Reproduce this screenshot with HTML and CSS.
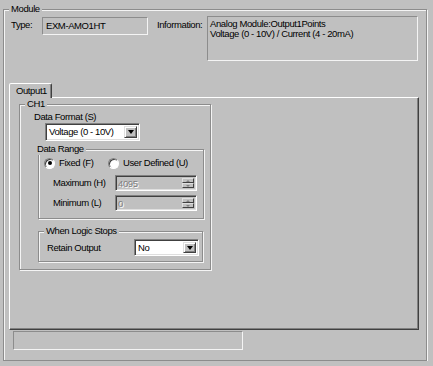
FILE: index.html
```html
<!DOCTYPE html>
<html lang="en">
<head>
  <meta charset="UTF-8">
  <title>Module - Output1</title>
  <link rel="stylesheet" href="styles.css">
</head>
<body>
  <fieldset class="group module">
    <legend>Module</legend>
    <div class="module-row">
      <span class="lbl type-lbl">Type:</span>
      <div class="static type-box">EXM-AMO1HT</div>
      <span class="lbl info-lbl">Information:</span>
      <div class="static info-box">Analog Module:Output1Points<br>Voltage (0 - 10V) / Current (4 - 20mA)</div>
    </div>

    <div class="tabs">
      <div class="tab">Output1</div>
    </div>
    <div class="panel">
      <fieldset class="group ch">
        <legend>CH1</legend>
        <div class="field-lbl">Data Format (S)</div>
        <div class="combo fmt-combo">
          <span class="combo-text">Voltage (0 - 10V)</span>
          <span class="drop"><i class="arrow"></i></span>
        </div>

        <fieldset class="group range">
          <legend>Data Range</legend>
          <div class="radios">
            <label class="radio-item fixed"><span class="radio checked"></span>Fixed (F)</label>
            <label class="radio-item"><span class="radio"></span>User Defined (U)</label>
          </div>
          <div class="spin-row first">
            <span class="spin-lbl">Maximum (H)</span>
            <div class="spin">
              <span class="spin-val">4095</span>
              <span class="spin-btns"><span class="sbtn"><i class="up"></i></span><span class="sbtn"><i class="down"></i></span></span>
            </div>
          </div>
          <div class="spin-row">
            <span class="spin-lbl">Minimum (L)</span>
            <div class="spin">
              <span class="spin-val">0</span>
              <span class="spin-btns"><span class="sbtn"><i class="up"></i></span><span class="sbtn"><i class="down"></i></span></span>
            </div>
          </div>
        </fieldset>

        <fieldset class="group stops">
          <legend>When Logic Stops</legend>
          <div class="retain-row">
            <span class="retain-lbl">Retain Output</span>
            <div class="combo retain-combo">
              <span class="combo-text">No</span>
              <span class="drop"><i class="arrow"></i></span>
            </div>
          </div>
        </fieldset>
      </fieldset>
    </div>

    <div class="status"></div>
  </fieldset>
</body>
</html>
```

FILE: styles.css
```css
* { box-sizing: border-box; }

body {
  margin: 0;
  padding: 3px 0 0 3px;
  background: #c0c0c0;
  font-family: "Liberation Sans", Arial, sans-serif;
  font-size: 9.5px;
  letter-spacing: -0.4px;
  line-height: 12px;
  color: #000;
}

/* etched group boxes */
.group {
  margin: 0;
  border: 1px solid #8c8c8c;
  box-shadow: inset 1px 1px 0 #f4f4f4, 1px 1px 0 #f4f4f4;
  min-inline-size: 0;
}
.group legend {
  padding: 0 2px;
  background: #c0c0c0;
  line-height: 12px;
}

.module {
  width: 424px;
  padding: 1px 0 10px 7px;
}
.module legend { margin-left: -2px; }

.module-row {
  display: flex;
  align-items: flex-start;
}
.lbl { padding-top: 3px; }
.type-lbl { width: 31px; }
.info-lbl { width: 50px; margin-left: 9px; }

.static {
  border: 1px solid;
  border-color: #8c8c8c #f4f4f4 #f4f4f4 #8c8c8c;
}
.type-box {
  width: 106px;
  height: 18px;
  margin-top: 1px;
  padding: 2px 0 0 3px;
}
.info-box {
  width: 211px;
  height: 45px;
  padding: 2px 0 0 2px;
  line-height: 10px;
}

/* tab control */
.tabs {
  display: flex;
  margin: 22px 0 0 -2px;
}
.tab {
  position: relative;
  z-index: 1;
  width: 43px;
  height: 15px;
  margin-bottom: -1px;
  padding: 1px 0 0 6px;
  background: #c0c0c0;
  border: 1px solid;
  border-bottom: none;
  border-color: #fff #404040 transparent #fff;
  border-radius: 2px 2px 0 0;
  box-shadow: inset -1px 0 0 #808080;
}
.panel {
  width: 410px;
  height: 233px;
  margin-left: -2px;
  padding-left: 9px;
  border: 1px solid;
  border-color: #fff #404040 #404040 #fff;
  box-shadow: inset -1px -1px 0 #808080;
}

.ch {
  width: 192px;
  padding: 1px 5px 7px 14px;
}
.ch legend { margin-left: -9px; }

.field-lbl { height: 12px; }

/* combo boxes */
.combo {
  display: flex;
  justify-content: space-between;
  background: #fff;
  border: 1px solid;
  border-color: #808080 #fff #fff #808080;
  box-shadow: inset 1px 1px 0 #404040, inset -1px -1px 0 #dfdfdf;
  padding: 2px;
}
.combo-text { padding-left: 1px; line-height: 12px; }
.fmt-combo {
  width: 95px;
  height: 18px;
  margin-left: 11px;
}
.drop {
  display: flex;
  align-items: center;
  justify-content: center;
  width: 13px;
  background: #c0c0c0;
  border: 1px solid;
  border-color: #dfdfdf #404040 #404040 #dfdfdf;
  box-shadow: inset 1px 1px 0 #fff, inset -1px -1px 0 #808080;
}
.arrow {
  width: 0;
  height: 0;
  border-left: 3.5px solid transparent;
  border-right: 3.5px solid transparent;
  border-top: 4px solid #000;
}

.range {
  width: 166px;
  margin: 2px 0 0 4px;
  padding: 2px 0 7px 5px;
}

.radios { display: flex; height: 12px; }
.radio-item {
  display: flex;
  align-items: center;
  gap: 4px;
}
.fixed { width: 64px; }
.radio {
  position: relative;
  width: 11px;
  height: 11px;
  border-radius: 50%;
  background: #fff;
  border: 1px solid;
  border-color: #808080 #fff #fff #808080;
  box-shadow: inset 1px 1px 0 #404040;
}
.radio.checked::after {
  content: "";
  position: absolute;
  left: 2.5px;
  top: 2.5px;
  width: 4px;
  height: 4px;
  border-radius: 50%;
  background: #000;
}

.spin-row {
  display: flex;
  align-items: center;
  margin-top: 4px;
}
.spin-row.first { margin-top: 6px; }
.spin-lbl { width: 71px; padding-left: 9px; }
.spin {
  display: flex;
  justify-content: space-between;
  width: 82px;
  height: 16px;
  padding: 2px;
  border: 1px solid;
  border-color: #808080 #fff #fff #808080;
  box-shadow: inset 1px 1px 0 #404040, inset -1px -1px 0 #dfdfdf;
}
.spin-val {
  color: #808080;
  text-shadow: 1px 1px 0 #fff;
  line-height: 11px;
}
.spin-btns {
  display: flex;
  flex-direction: column;
  width: 12px;
}
.sbtn {
  flex: 1;
  display: flex;
  align-items: center;
  justify-content: center;
  border: 1px solid;
  border-color: #dfdfdf #404040 #404040 #dfdfdf;
}
.sbtn i {
  width: 0;
  height: 0;
  border-left: 2px solid transparent;
  border-right: 2px solid transparent;
}
.sbtn .up { border-bottom: 2px solid #808080; }
.sbtn .down { border-top: 2px solid #808080; }

.stops {
  width: 165px;
  margin: 6px 0 0 4px;
  padding: 2px 0 5px 8px;
}
.stops legend { margin-left: -3px; }
.retain-row { display: flex; align-items: center; }
.retain-lbl { width: 87px; }
.retain-combo {
  width: 65px;
  height: 17px;
}

.status {
  width: 230px;
  height: 19px;
  margin: 1px 0 0 2px;
  border: 1px solid;
  border-color: #8c8c8c #f4f4f4 #f4f4f4 #8c8c8c;
}
```
